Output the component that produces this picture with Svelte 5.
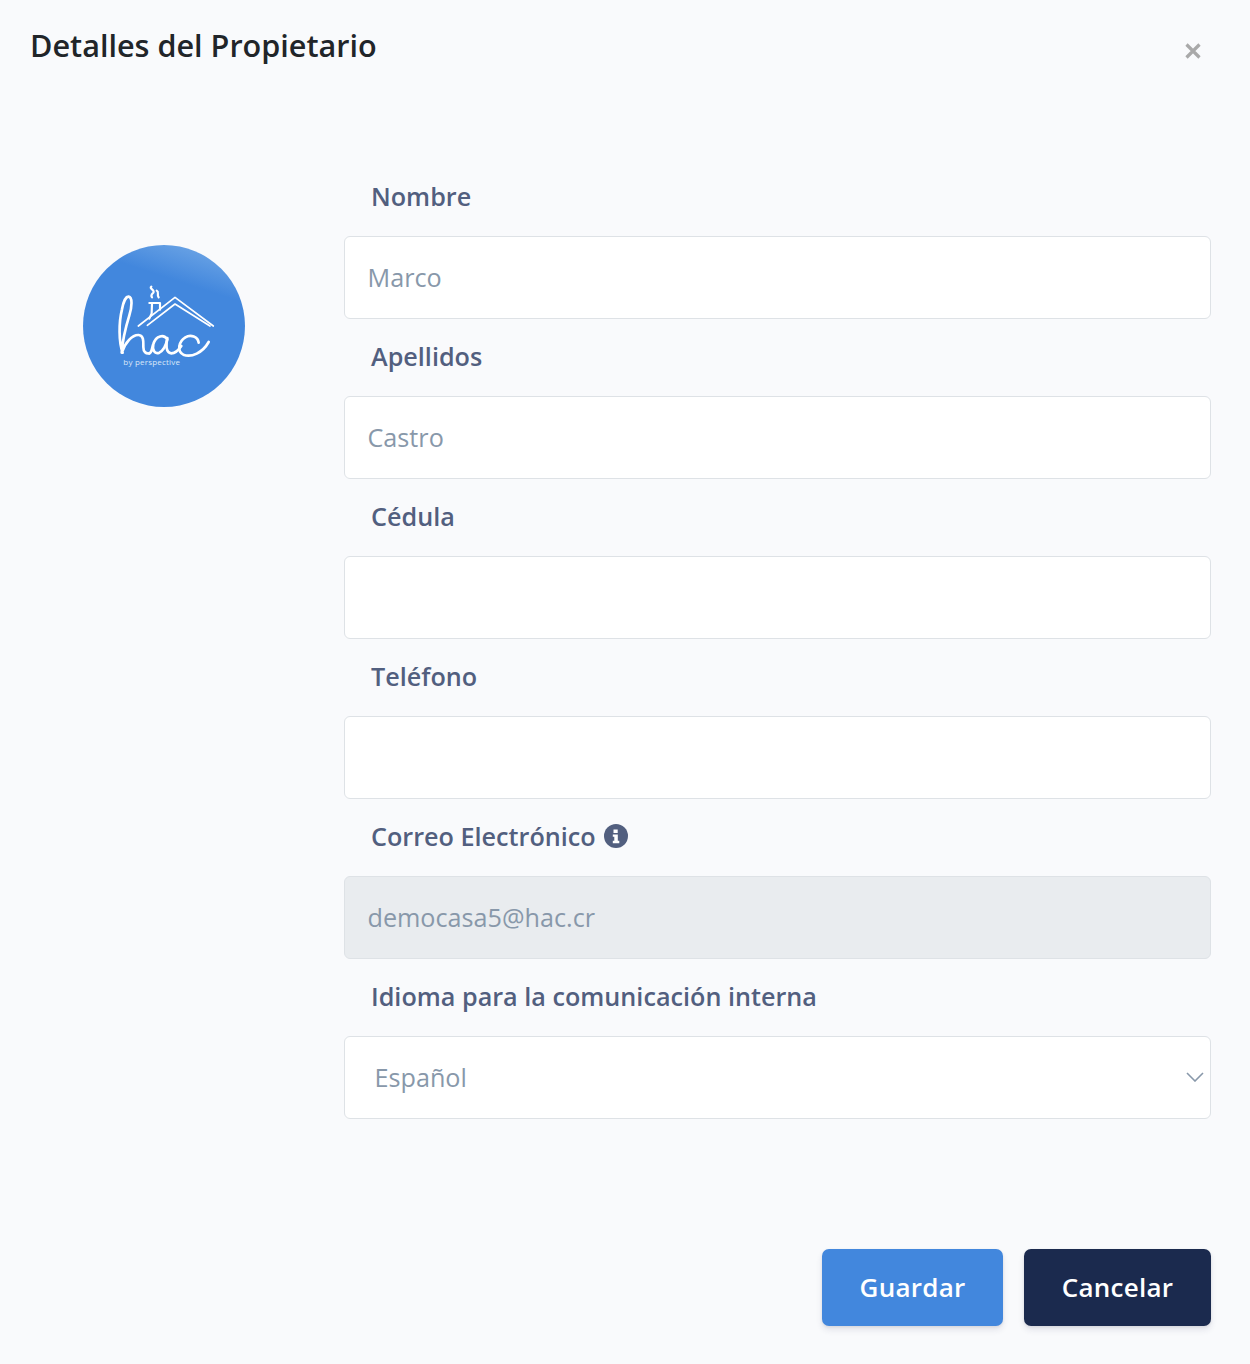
<script>
  let form = $state({ nombre: 'Marco', apellidos: 'Castro', cedula: '', telefono: '', idioma: 'es' })
</script>

<div class="modal">
  <header class="head">
    <h1>Detalles del Propietario</h1>
    <button class="close" aria-label="Cerrar">
      <svg viewBox="0 0 16 16" width="16" height="16" fill="none" stroke="currentColor" stroke-width="3.2">
        <path d="M1.5 1.5l13 13M14.5 1.5l-13 13"/>
      </svg>
    </button>
  </header>

  <div class="body">
    <div class="side">
      <div class="logo">
        <svg viewBox="39 29 486 486" width="162" height="162" fill="none" stroke="#fff" stroke-linecap="round" stroke-linejoin="round">
          <g stroke-width="8">
            <path d="M158 352C146 320 146 262 156 222C160 200 168 183 176 184C188 186 186 214 178 240C170 266 158 310 155 352C166 322 186 298 206 299C222 300 220 320 220 335C220 350 228 356 238 354"/>
            <path d="M238 354C246 352 246 336 250 326C258 300 282 296 292 312C288 330 280 346 268 352C254 358 246 344 250 326"/>
            <path d="M292 308C288 326 286 352 304 354C316 354 326 344 334 332"/>
            <path d="M386 322C384 304 362 296 346 306C326 318 320 348 340 358C364 368 398 352 416 320"/>
          </g>
          <g stroke-width="5">
            <path d="M205 272L315 186l115 86"/>
            <path d="M232 270l83-64 105 66"/>
          </g>
          <g stroke-width="6.5">
            <path d="M238 203h32v20M246 204l-1 30-7 16"/>
            <path d="M244 154c-8 6 12 10 6 18-5 5-9 8-4 14M260 166c9 5-1 10 6 20"/>
          </g>
          <text x="160" y="390" class="by">by perspective</text>
        </svg>
      </div>
    </div>

    <form class="fields" onsubmit={(e) => e.preventDefault()}>
      <label class="field">
        <span>Nombre</span>
        <input type="text" bind:value={form.nombre} />
      </label>
      <label class="field">
        <span>Apellidos</span>
        <input type="text" bind:value={form.apellidos} />
      </label>
      <label class="field">
        <span>Cédula</span>
        <input type="text" bind:value={form.cedula} />
      </label>
      <label class="field">
        <span>Teléfono</span>
        <input type="text" bind:value={form.telefono} />
      </label>
      <label class="field">
        <span>Correo Electrónico
          <svg class="info" viewBox="0 0 24 24" width="24" height="24">
            <circle cx="12" cy="12" r="12" fill="#525f7f"/>
            <path d="M9.5 5.5h4.2v3.4H9.5zM8.8 10.4h5v6.4h1.5v2.4H8.8v-2.4h1.5v-4H8.8z" fill="#fff"/>
          </svg>
        </span>
        <input type="text" value="democasa5@hac.cr" disabled />
      </label>
      <label class="field">
        <span>Idioma para la comunicación interna</span>
        <div class="select-wrap">
          <select bind:value={form.idioma}>
            <option value="es">Español</option>
            <option value="en">English</option>
          </select>
          <svg viewBox="0 0 18 10" width="18" height="10" fill="none" stroke="#8898aa" stroke-width="1.6">
            <path d="M1 1l8 8 8-8"/>
          </svg>
        </div>
      </label>
    </form>
  </div>

  <footer class="actions">
    <button class="btn primary">Guardar</button>
    <button class="btn dark">Cancelar</button>
  </footer>
</div>

<style>
  :global(body) {
    background: #f9fafc;
    font-family: "Open Sans", sans-serif;
  }
  .modal {
    height: 1364px;
    box-sizing: border-box;
    padding: 0 39px 38px 30px;
    display: flex;
    flex-direction: column;
  }
  .head {
    display: flex;
    justify-content: space-between;
    align-items: flex-start;
    height: 158px;
    padding-top: 24px;
    box-sizing: border-box;
  }
  h1 {
    margin: 0;
    font-size: 30.6px;
    line-height: 42px;
    font-weight: 600;
    color: #212529;
  }
  .close {
    border: 0;
    background: none;
    padding: 0;
    margin: 19px 10px 0 0;
    height: 16px;
    color: #a9a9a9;
  }
  .close svg { display: block; }
  .body {
    display: flex;
    flex: 1;
  }
  .side {
    width: 314px;
    flex-shrink: 0;
    padding: 87px 0 0 53px;
    box-sizing: border-box;
  }
  .logo {
    width: 162px;
    height: 162px;
    border-radius: 50%;
    background: linear-gradient(198deg, #7aaee8 0%, #4287dd 27%);
  }
  .logo svg { display: block; }
  .by {
    fill: #dbe8f8;
    stroke: none;
    font-size: 24px;
    letter-spacing: 0.6px;
    font-family: "Open Sans", sans-serif;
  }
  .fields {
    flex: 1;
    display: flex;
    flex-direction: column;
  }
  .field {
    display: flex;
    flex-direction: column;
    height: 160px;
  }
  .field > span {
    display: flex;
    align-items: center;
    gap: 8px;
    flex: none;
    height: 76.5px;
    padding: 0 0 1.5px 27px;
    font-size: 25.2px;
    font-weight: 600;
    color: #525f7f;
  }
  input, select {
    box-sizing: border-box;
    flex: none;
    width: 100%;
    height: 82.5px;
    padding: 0 22.5px;
    font: 400 25.2px "Open Sans", sans-serif;
    color: #8898aa;
    background: #fff;
    border: 1px solid #dee2e6;
    border-radius: 6px;
    outline: none;
  }
  input:disabled {
    background: #e9ecef;
    opacity: 1;
    -webkit-text-fill-color: #8898aa;
  }
  select {
    appearance: none;
    padding: 0 29.5px;
  }
  .select-wrap { position: relative; }
  .select-wrap svg {
    position: absolute;
    right: 7px;
    top: 36px;
  }
  .actions {
    display: flex;
    justify-content: flex-end;
    gap: 21px;
  }
  .btn {
    height: 77px;
    border: 0;
    border-radius: 7px;
    padding: 0 0 2px;
    font: 600 26px "Open Sans", sans-serif;
    letter-spacing: 0.25px;
    color: #fff;
    box-shadow: 0 4px 6px rgba(50, 50, 93, 0.11), 0 1px 3px rgba(0, 0, 0, 0.08);
  }
  .primary { width: 181px; background: #4287dd; }
  .dark { width: 187px; background: #1b2a4e; }
</style>
